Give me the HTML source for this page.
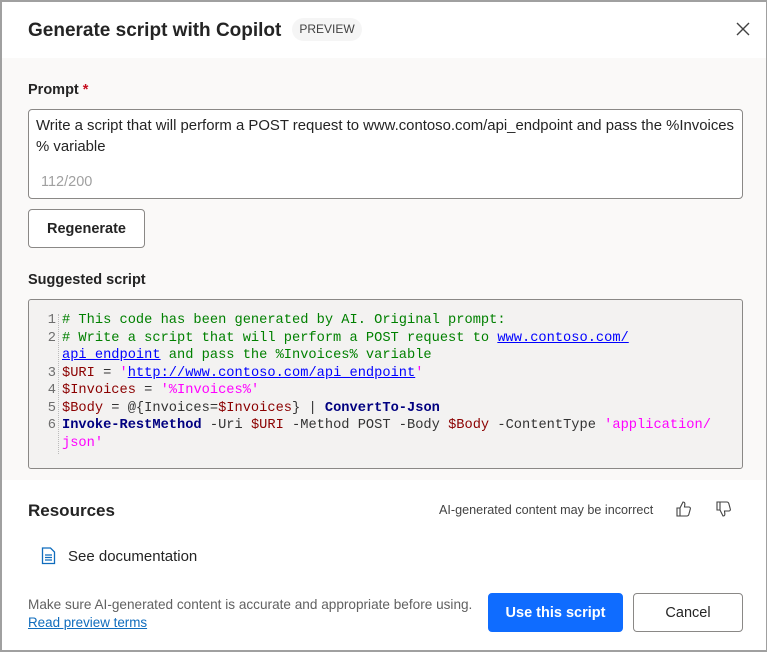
<!DOCTYPE html>
<html><head><style>
*{box-sizing:border-box;margin:0;padding:0}
body{width:767px;height:652px;overflow:hidden;background:#fff;font-family:"Liberation Sans",sans-serif;color:#242424;position:relative}
.frame{position:absolute;inset:0;border:2px solid #a0a0a0;border-right-width:1px;border-bottom-width:2px}
.abs{position:absolute}
.gray{position:absolute;left:2px;right:1px;top:58px;height:422px;background:#faf9f8}
.code{position:absolute;left:28px;top:299px;width:715px;height:170px;background:#f3f2f1;border:1px solid #8a8886;border-radius:3px}
.ln{position:absolute;font-family:"Liberation Mono","DejaVu Sans Mono",monospace;font-size:13.7px;line-height:17.5px;white-space:pre}
.nums{left:40px;top:312px;color:#6e6e6e;text-align:right;width:16px}
.src{left:62px;top:312px;color:#333}
.sep{position:absolute;left:58px;top:314px;height:140px;border-left:1px dotted #bbb}
.c{color:#008000}.u{color:#0000ff;text-decoration:underline}.v{color:#8b0000}.s{color:#ff00ff}.k{color:#000080;font-weight:bold}
.btn{position:absolute;border:1px solid #8a8886;border-radius:4px;background:#fff;font-size:14.5px;font-weight:bold;text-align:center}
</style></head><body>
<div class="gray"></div>
<div class="frame"></div>
<div class="abs" style="left:28px;top:20px;font-size:19px;font-weight:bold;">Generate script with Copilot</div>
<div class="abs" style="left:292px;top:18px;width:70px;height:23px;border-radius:12px;background:#f5f5f5;font-size:12px;line-height:23px;text-align:center;color:#424242">PREVIEW</div>
<svg class="abs" style="left:736px;top:22px" width="14" height="14" viewBox="0 0 14 14"><path d="M1 1L13 13M13 1L1 13" stroke="#424242" stroke-width="1.4"/></svg>
<div class="abs" style="left:28px;top:82px;font-size:14.5px;font-weight:bold">Prompt <span style="color:#c50f1f">*</span></div>
<div class="abs" style="left:28px;top:109px;width:715px;height:90px;background:#fff;border:1px solid #8a8886;border-radius:4px"></div>
<div class="abs" style="left:36px;top:116px;width:705px;font-size:14.9px;line-height:21px;white-space:nowrap">Write a script that will perform a POST request to www.contoso.com/api_endpoint and pass the %Invoices<br>% variable</div>
<div class="abs" style="left:41px;top:174px;font-size:14.5px;color:#a0a0a0">112/200</div>
<div class="btn" style="left:28px;top:209px;width:117px;height:39px;line-height:39px">Regenerate</div>
<div class="abs" style="left:28px;top:272px;font-size:14.5px;font-weight:bold">Suggested script</div>
<div class="code"></div>
<div class="sep"></div>
<div class="ln nums">1
2

3
4
5
6</div>
<div class="ln src"><span class="c"># This code has been generated by AI. Original prompt:
# Write a script that will perform a POST request to <span class="u">www.contoso.com/</span>
<span class="u">api_endpoint</span> and pass the %Invoices% variable</span>
<span class="v">$URI</span> = <span class="s">'<span class="u">http://www.contoso.com/api_endpoint</span>'</span>
<span class="v">$Invoices</span> = <span class="s">'%Invoices%'</span>
<span class="v">$Body</span> = @{Invoices=<span class="v">$Invoices</span>} | <span class="k">ConvertTo-Json</span>
<span class="k">Invoke-RestMethod</span> -Uri <span class="v">$URI</span> -Method POST -Body <span class="v">$Body</span> -ContentType <span class="s">'application/
json'</span></div>
<div class="abs" style="left:28px;top:501px;font-size:17px;font-weight:bold">Resources</div>
<div class="abs" style="left:439px;top:503px;font-size:12.6px;color:#424242">AI-generated content may be incorrect</div>
<svg class="abs" style="left:674px;top:500px" width="18" height="18" viewBox="0 0 18 18"><path d="M3 8h3v8H3zM6 8l3-6c1.5 0 2 1 1.8 2.5L10.5 7H15c1 0 1.6 1 1.3 2l-1.5 5.5c-.3 1-1 1.5-2 1.5H6" fill="none" stroke="#424242" stroke-width="1.1"/></svg>
<svg class="abs" style="left:714px;top:500px" width="18" height="18" viewBox="0 0 18 18"><path d="M3 2h3v8H3zM6 10l3 6c1.5 0 2-1 1.8-2.5L10.5 11H15c1 0 1.6-1 1.3-2L14.8 3.5c-.3-1-1-1.5-2-1.5H6" fill="none" stroke="#424242" stroke-width="1.1"/></svg>
<svg class="abs" style="left:41px;top:547px" width="16" height="18" viewBox="0 0 16 18"><path d="M1.5 1h8l4 4v11.5h-12z" fill="none" stroke="#0f6cbd" stroke-width="1.3"/><path d="M4 8h7M4 10.5h7M4 13h7" stroke="#0f6cbd" stroke-width="1.2"/></svg>
<div class="abs" style="left:68px;top:548px;font-size:15px">See documentation</div>
<div class="abs" style="left:28px;top:597px;font-size:13.6px;color:#616161;white-space:nowrap">Make sure AI-generated content is accurate and appropriate before using.</div>
<div class="abs" style="left:28px;top:615px;font-size:13.4px;color:#0f6cbd;text-decoration:underline">Read preview terms</div>
<div class="btn" style="left:488px;top:593px;width:135px;height:39px;line-height:39px;background:#0f6cff;border-color:#0f6cff;color:#fff">Use this script</div>
<div class="btn" style="left:633px;top:593px;width:110px;height:39px;line-height:39px;font-weight:normal">Cancel</div>
</body></html>
